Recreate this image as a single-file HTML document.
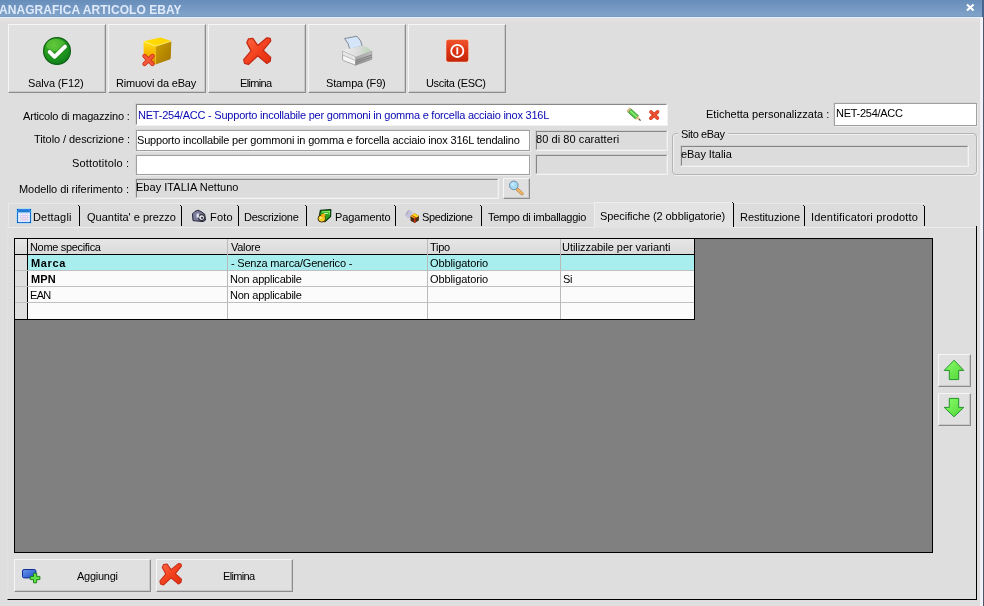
<!DOCTYPE html>
<html><head><meta charset="utf-8">
<style>
html,body{margin:0;padding:0;}
body{width:984px;height:606px;overflow:hidden;position:relative;background:#dedede;font-family:"Liberation Sans",sans-serif;font-size:11px;color:#000;}
.a{position:absolute;box-sizing:border-box;}
.t{will-change:transform;position:absolute;white-space:nowrap;line-height:13px;height:13px;}
.btn{position:absolute;box-sizing:border-box;background:#e0e0e0;border-top:1px solid #f6f6f6;border-left:1px solid #f6f6f6;border-right:1px solid #8c8c8c;border-bottom:1px solid #8c8c8c;box-shadow:inset -1px -1px 0 #c8c8c8;}
.sunk{position:absolute;box-sizing:border-box;border:1px solid;border-color:#d0d0d0 #f2f2f2 #f2f2f2 #d0d0d0;}
.sunk>i{position:absolute;left:0;top:0;right:0;bottom:0;border:1px solid;border-color:#888 #fff #fff #888;background:#fff;}
.ro>i{background:#dcdcdc;border-color:#868686 #e4e4e4 #e4e4e4 #868686;}
.flat{position:absolute;box-sizing:border-box;border:1px solid #a0a0a0;background:#fff;box-shadow:-1px -1px 0 0 #d4d4d4, 1px 1px 0 0 #ececec;}
.sep{position:absolute;width:1px;background:#000;top:206px;height:20px;}
.sep::before{content:"";position:absolute;left:-1px;top:-1px;width:1px;height:1px;background:#222;}
</style></head><body>
<!-- title bar -->
<div class="a" id="title" style="left:0;top:0;width:984px;height:17px;background:linear-gradient(#678dba,#80a3c9 94%,#7095bf);"></div>
<div class="a" style="left:0;top:17px;width:984px;height:1px;background:#eaf1fa;"></div>
<div class="a" style="left:0;top:18px;width:980px;height:1px;background:#dee1e6;"></div>
<div class="a" style="left:0;top:19px;width:980px;height:3px;background:#e2e1e0;"></div>
<div class="t" id="ttl" style="left:-0.75px;top:4px;font-weight:bold;color:#dfeafa;font-size:12px;letter-spacing:0.054px;">ANAGRAFICA ARTICOLO EBAY</div>
<svg class="a" style="left:965px;top:3px" width="11" height="10" viewBox="0 0 11 10"><path d="M2 1.5 L8.600 7.5 M8.600 1.5 L2 7.5" stroke="#fff" stroke-width="2.1"/></svg>
<!-- window right edge -->
<div class="a" style="left:980px;top:18px;width:3px;height:588px;background:#f1f2f8;"></div>
<div class="a" style="left:983px;top:0;width:1px;height:606px;background:#4e5868;"></div>
<div class="a" style="left:982px;top:0;width:2px;height:17px;background:#46668f;"></div>

<!-- toolbar buttons -->
<div class="btn" id="b1" style="left:8px;top:24px;width:98px;height:69px;"></div>
<div class="t" id="x1" style="left:28.00px;top:77px;letter-spacing:-0.125px;">Salva (F12)</div>
<div class="btn" id="b2" style="left:108px;top:24px;width:98px;height:69px;"></div>
<div class="t" id="x2" style="left:115.60px;top:77px;letter-spacing:-0.214px;">Rimuovi da eBay</div>
<div class="btn" id="b3" style="left:208px;top:24px;width:98px;height:69px;"></div>
<div class="t" id="x3" style="left:239.60px;top:77px;letter-spacing:-0.667px;">Elimina</div>
<div class="btn" id="b4" style="left:308px;top:24px;width:98px;height:69px;"></div>
<div class="t" id="x4" style="left:325.75px;top:77px;letter-spacing:-0.135px;">Stampa (F9)</div>
<div class="btn" id="b5" style="left:408px;top:24px;width:98px;height:69px;"></div>
<div class="t" id="x5" style="left:426.00px;top:77px;letter-spacing:-0.327px;">Uscita (ESC)</div>

<!-- labels -->
<div class="t" id="l1" style="left:22.60px;top:110px;letter-spacing:-0.177px;">Articolo di magazzino :</div>
<div class="t" id="l2" style="left:33.85px;top:133px;letter-spacing:-0.066px;">Titolo / descrizione :</div>
<div class="t" id="l3" style="left:72.10px;top:157px;letter-spacing:0.175px;">Sottotitolo :</div>
<div class="t" id="l4" style="left:19.20px;top:183px;letter-spacing:-0.056px;">Modello di riferimento :</div>
<div class="t" id="l5" style="left:705.90px;top:108px;letter-spacing:0.014px;">Etichetta personalizzata :</div>

<!-- fields -->
<div class="sunk" style="left:135px;top:103px;width:533px;height:23px;"><i></i></div>
<div class="t" id="f1" style="left:138.30px;top:109px;color:#0808b4;letter-spacing:-0.223px;">NET-254/ACC - Supporto incollabile per gommoni in gomma e forcella acciaio inox 316L</div>
<div class="flat" style="left:136px;top:130px;width:394px;height:21px;"></div>
<div class="t" id="f2" style="left:137.10px;top:134px;letter-spacing:-0.188px;">Supporto incollabile per gommoni in gomma e forcella acciaio inox 316L tendalino</div>
<div class="flat" style="left:136px;top:155px;width:394px;height:20px;"></div>
<div class="sunk ro" style="left:135px;top:178px;width:364px;height:21px;"><i></i></div>
<div class="t" id="f4" style="left:136.00px;top:181px;letter-spacing:0.028px;">Ebay ITALIA Nettuno</div>
<div class="sunk ro" style="left:535px;top:130px;width:133px;height:21px;"><i></i></div>
<div class="t" id="f5" style="left:536.20px;top:133px;letter-spacing:0.068px;">80 di 80 caratteri</div>
<div class="sunk ro" style="left:535px;top:154px;width:133px;height:21px;"><i></i></div>
<div class="btn" style="left:503px;top:178px;width:27px;height:21px;"></div>
<div class="flat" style="left:834px;top:103px;width:143px;height:23px;"></div>
<div class="t" id="f6" style="left:835.60px;top:107px;letter-spacing:-0.275px;">NET-254/ACC</div>

<!-- group box -->
<div class="a" style="left:672px;top:133px;width:305px;height:42px;border:1px solid #b4b4b4;border-radius:4px;box-shadow:1px 1px 0 #f0f0f0, inset 1px 1px 0 #f0f0f0;"></div>
<div class="a" style="left:678px;top:132px;width:50px;height:4px;background:#dedede;"></div>
<div class="t" id="g1" style="left:680.50px;top:128px;letter-spacing:-0.382px;">Sito eBay</div>
<div class="sunk ro" style="left:680px;top:145px;width:289px;height:22px;"><i></i></div>
<div class="t" id="g2" style="left:681.00px;top:148px;letter-spacing:-0.060px;">eBay Italia</div>

<!-- tabs -->
<div class="a" style="left:8px;top:203px;width:917px;height:24px;border-top:1px solid #e8e8e8;border-left:1px solid #e8e8e8;background:#dcdcdc;"></div>
<div class="a" id="tabpanel" style="left:7px;top:227px;width:970px;height:373px;border-left:1px solid #e1e1e1;border-top:1px solid #ebebeb;border-right:1px solid #000;border-bottom:1px solid #000;"></div>
<div class="a" style="left:594px;top:202px;width:140px;height:26px;background:#e3e3e3;border-top:1px solid #eeeeee;border-left:1px solid #eeeeee;"></div>
<div class="a" style="left:976px;top:226px;width:1px;height:2px;background:#000;"></div>
<div class="sep" style="left:79px"></div>
<div class="sep" style="left:181px"></div>
<div class="sep" style="left:238px"></div>
<div class="sep" style="left:306px"></div>
<div class="sep" style="left:395px"></div>
<div class="sep" style="left:481px"></div>
<div class="sep" style="left:733px;top:203px;height:24px;"></div>
<div class="sep" style="left:804px"></div>
<div class="sep" style="left:924px"></div>
<div class="t" id="t1" style="left:33.10px;top:211px;letter-spacing:0.164px;">Dettagli</div>
<div class="t" id="t2" style="left:86.70px;top:211px;letter-spacing:0.000px;">Quantita' e prezzo</div>
<div class="t" id="t3" style="left:209.80px;top:211px;letter-spacing:0.217px;">Foto</div>
<div class="t" id="t4" style="left:244.25px;top:211px;letter-spacing:-0.270px;">Descrizione</div>
<div class="t" id="t5" style="left:334.80px;top:211px;letter-spacing:-0.081px;">Pagamento</div>
<div class="t" id="t6" style="left:421.70px;top:211px;letter-spacing:-0.389px;">Spedizione</div>
<div class="t" id="t7" style="left:488.15px;top:211px;letter-spacing:-0.261px;">Tempo di imballaggio</div>
<div class="t" id="t8" style="left:600.00px;top:210px;letter-spacing:-0.077px;">Specifiche (2 obbligatorie)</div>
<div class="t" id="t9" style="left:739.90px;top:211px;letter-spacing:-0.045px;">Restituzione</div>
<div class="t" id="t10" style="left:810.60px;top:211px;letter-spacing:0.191px;">Identificatori prodotto</div>

<!-- grid area -->
<div class="a" id="gray" style="left:14px;top:238px;width:919px;height:315px;background:#808080;border:1px solid #000;"></div>
<div class="a" id="grid" style="left:14px;top:238px;width:681px;height:82px;background:#fbfbfb;border:1px solid #000;"></div>
<div class="a" style="left:15px;top:239px;width:679px;height:15px;background:linear-gradient(#e6e6e6,#dadada);"></div>
<div class="a" style="left:15px;top:254px;width:679px;height:1px;background:#000;"></div>
<div class="a" style="left:15px;top:255px;width:12px;height:64px;background:#dedede;"></div>
<div class="a" style="left:27px;top:239px;width:1px;height:80px;background:#000;"></div>
<div class="a" style="left:28px;top:255px;width:666px;height:15px;background:#a8eeee;"></div>
<!-- grid lines -->
<div class="a" style="left:15px;top:270px;width:679px;height:1px;background:#c0c0c0;"></div>
<div class="a" style="left:15px;top:286px;width:679px;height:1px;background:#c0c0c0;"></div>
<div class="a" style="left:15px;top:302px;width:679px;height:1px;background:#c0c0c0;"></div>
<div class="a" style="left:227px;top:239px;width:1px;height:80px;background:#bababa;"></div>
<div class="a" style="left:427px;top:239px;width:1px;height:80px;background:#bababa;"></div>
<div class="a" style="left:560px;top:239px;width:1px;height:80px;background:#bababa;"></div>
<div class="t" id="h1" style="left:30.00px;top:241px;letter-spacing:-0.327px;">Nome specifica</div>
<div class="t" id="h2" style="left:230.65px;top:241px;letter-spacing:-0.270px;">Valore</div>
<div class="t" id="h3" style="left:430.25px;top:241px;letter-spacing:-0.266px;">Tipo</div>
<div class="t" id="h4" style="left:562.25px;top:241px;letter-spacing:-0.062px;">Utilizzabile per varianti</div>
<div class="t" id="r1a" style="left:30.95px;top:257px;font-weight:bold;letter-spacing:0.663px;">Marca</div>
<div class="t" id="r1b" style="left:230.90px;top:257px;letter-spacing:-0.200px;">- Senza marca/Generico -</div>
<div class="t" id="r1c" style="left:430.40px;top:257px;letter-spacing:-0.099px;">Obbligatorio</div>
<div class="t" id="r2a" style="left:30.95px;top:273px;font-weight:bold;letter-spacing:0.175px;">MPN</div>
<div class="t" id="r2b" style="left:229.90px;top:273px;letter-spacing:-0.235px;">Non applicabile</div>
<div class="t" id="r2c" style="left:430.40px;top:273px;letter-spacing:-0.099px;">Obbligatorio</div>
<div class="t" id="r2d" style="left:563.00px;top:273px;letter-spacing:-0.400px;">Si</div>
<div class="t" id="r3a" style="left:30.00px;top:289px;letter-spacing:-0.700px;">EAN</div>
<div class="t" id="r3b" style="left:229.90px;top:289px;letter-spacing:-0.235px;">Non applicabile</div>

<!-- arrows -->
<div class="btn" style="left:938px;top:354px;width:33px;height:33px;"></div>
<div class="btn" style="left:938px;top:393px;width:33px;height:33px;"></div>

<!-- bottom buttons -->
<div class="btn" id="bb1" style="left:14px;top:559px;width:137px;height:33px;"></div>
<div class="t" id="bt1" style="left:77.40px;top:570px;letter-spacing:-0.271px;">Aggiungi</div>
<div class="btn" id="bb2" style="left:156px;top:559px;width:137px;height:33px;"></div>
<div class="t" id="bt2" style="left:223.30px;top:570px;letter-spacing:-0.642px;">Elimina</div>

<!-- ICONS -->
<svg class="a" style="left:0;top:0;pointer-events:none" width="984" height="606" viewBox="0 0 984 606">
<defs>
<radialGradient id="gc" cx="0.38" cy="0.28" r="0.8"><stop offset="0" stop-color="#4cbc2a"/><stop offset="0.5" stop-color="#259c1e"/><stop offset="1" stop-color="#0a7a1e"/></radialGradient>
<linearGradient id="rx" x1="0" y1="0" x2="1" y2="1"><stop offset="0" stop-color="#ff6a48"/><stop offset="0.5" stop-color="#f4421f"/><stop offset="1" stop-color="#e02e10"/></linearGradient>
<linearGradient id="bxl" x1="0" y1="0" x2="0" y2="1"><stop offset="0" stop-color="#ffe21a"/><stop offset="0.5" stop-color="#f6b800"/><stop offset="1" stop-color="#d88000"/></linearGradient>
<linearGradient id="bxr" x1="0" y1="0" x2="1" y2="1"><stop offset="0" stop-color="#cfa000"/><stop offset="1" stop-color="#a27400"/></linearGradient>
<linearGradient id="bxt" x1="0" y1="0" x2="1" y2="0"><stop offset="0" stop-color="#ffe000"/><stop offset="1" stop-color="#ffd000"/></linearGradient>
<linearGradient id="pw" x1="0" y1="0" x2="0" y2="1"><stop offset="0" stop-color="#f0552c"/><stop offset="0.5" stop-color="#dc3412"/><stop offset="1" stop-color="#c42608"/></linearGradient>
<linearGradient id="prr" x1="0" y1="0" x2="0" y2="1"><stop offset="0" stop-color="#c2c2c2"/><stop offset="1" stop-color="#8e8e8e"/></linearGradient>
<linearGradient id="prt" x1="0" y1="0" x2="1" y2="0"><stop offset="0" stop-color="#eeeeee"/><stop offset="0.6" stop-color="#d8dad8"/><stop offset="0.85" stop-color="#c2d6be"/><stop offset="1" stop-color="#c8ccc8"/></linearGradient>
<linearGradient id="ga" x1="0" y1="0" x2="1" y2="1"><stop offset="0" stop-color="#8cff6a"/><stop offset="1" stop-color="#4ed436"/></linearGradient>
<linearGradient id="bl" x1="0" y1="0" x2="1" y2="1"><stop offset="0" stop-color="#6a98f0"/><stop offset="1" stop-color="#1c4cc0"/></linearGradient>
<g id="bigx"><path d="M5 2.3 L9.4 1.7 L14.3 8.8 L23.5 1.2 L26.8 1.7 L27.3 4.5 L19.7 13.7 L27.3 20.8 L26.8 24.6 L23.5 26.8 L14.3 19.2 L5 27.9 L1.2 26.8 L0.3 23 L7.7 14.3 L3.4 6.1 Z" fill="url(#rx)" stroke="#c42c14" stroke-width="1.3" stroke-linejoin="round"/></g>
</defs>
<!-- save -->
<circle cx="57" cy="51" r="13.4" fill="url(#gc)" stroke="#0f6214" stroke-width="1.2"/>
<ellipse cx="55.5" cy="45" rx="9.5" ry="6" fill="#9be860" opacity="0.28"/>
<path d="M49.6 51.8 L54.6 56.8 L65 46.600" fill="none" stroke="#0f7418" stroke-width="5.2" stroke-linecap="round" stroke-linejoin="round" opacity="0.55"/>
<path d="M49.6 51.8 L54.6 56.8 L65 46.600" fill="none" stroke="#fff" stroke-width="3.9" stroke-linecap="round" stroke-linejoin="round"/>
<!-- box -->
<path d="M143.5 41.2 L160.5 37.4 L171.3 41 L155.6 46.2 Z" fill="url(#bxt)"/>
<path d="M143.5 41.2 L155.6 46.2 L155.6 64.6 L145.2 59.6 Q143.8 58.8 143.8 57 Z" fill="url(#bxl)"/>
<path d="M155.6 46.2 L171.3 41 L170.8 57.6 Q170.8 59 169.6 59.4 L155.6 64.6 Z" fill="url(#bxr)"/>
<path d="M143.8 41.400 L155.6 46.2 L171 41.2" fill="none" stroke="#fff27a" stroke-width="0.9" opacity="0.9"/>
<path d="M155.6 46.4 V64.2" stroke="#f4c418" stroke-width="0.8" opacity="0.8"/>
<path d="M144.5 56 L152.5 64 M152.5 56 L144.5 64" stroke="#c8301a" stroke-width="4.4" stroke-linecap="round"/>
<path d="M144.5 56 L152.5 64 M152.5 56 L144.5 64" stroke="#f65838" stroke-width="2.8" stroke-linecap="round"/>
<!-- elimina big -->
<use href="#bigx" transform="translate(243.4,36.6)"/>
<!-- printer -->
<path d="M344.6 38.6 L356.8 36.2 Q361.6 40.4 362.2 46.2 L349.8 49.4 Q348.8 43 344.6 38.6 Z" fill="#d4e4f9" stroke="#6a727c" stroke-width="0.8" stroke-linejoin="round"/>
<path d="M342.6 51 Q342.6 50.2 344 49.8 L349.6 48.400 L362.2 45.8 L365.6 46.4 L371.6 50.600 Q372 51.2 371.6 51.6 L355.8 57.2 Z" fill="url(#prt)"/>
<path d="M342.6 51 L355.8 57.2 L355.6 65.2 L343.6 60.6 Q342.6 60.2 342.6 59.2 Z" fill="#f6f6f6" stroke="#8e8e8e" stroke-width="0.7" stroke-linejoin="round"/>
<path d="M342.8 51.2 L355.6 57.3 L355.6 60.2 L342.8 54.600 Z" fill="#e6e6e6"/>
<path d="M355.8 57.2 L371.8 51.4 L371.8 59.4 L355.6 65.2 Z" fill="url(#prr)" stroke="#8a8a8a" stroke-width="0.5"/>
<path d="M355.8 60.600 L371.8 55 M355.8 62.600 L371.8 57" stroke="#7a7a7a" stroke-width="0.9"/>
<path d="M342.8 55 L355.6 60.600" stroke="#aaaaaa" stroke-width="0.8"/>
<!-- power -->
<rect x="445.5" y="39" width="23.6" height="23.6" rx="2.6" fill="#f6dccc"/>
<rect x="446.3" y="39.8" width="22" height="22" rx="2" fill="url(#pw)"/>
<circle cx="457.3" cy="50.9" r="6.1" fill="none" stroke="#fff" stroke-width="1.8"/>
<rect x="456.4" y="47.4" width="1.8" height="7" fill="#fff"/>
<!-- pencil -->
<g transform="translate(628.3,109.5) rotate(42)">
<rect x="0" y="-2.1" width="2" height="4.2" fill="#e8c890" stroke="#a08040" stroke-width="0.5"/>
<rect x="2" y="-2.2" width="9.600" height="4.4" fill="#52c442" stroke="#2e8a22" stroke-width="0.7"/>
<rect x="2.4" y="-0.9" width="9" height="1.3" fill="#90f080"/>
<path d="M11.6 -2.2 L16.2 0 L11.6 2.2 Z" fill="#e6c08c"/>
<path d="M14.600 -0.9 L17.2 0 L14.600 0.9 Z" fill="#504040"/>
</g>
<!-- small red x -->
<path d="M651 112 L657.4 118 M657.6 111.8 L650.8 118.2" stroke="#cf3a22" stroke-width="3.6" stroke-linecap="round"/>
<path d="M651 112 L657.4 118 M657.6 111.8 L650.8 118.2" stroke="#ee5030" stroke-width="2.2" stroke-linecap="round"/>
<!-- magnifier -->
<path d="M517 189 L522 193.6" stroke="#b08048" stroke-width="3.2" stroke-linecap="round"/>
<path d="M517 189 L522 193.6" stroke="#f6b868" stroke-width="2" stroke-linecap="round"/>
<circle cx="513.8" cy="185.4" r="4.3" fill="#a4dcf8" stroke="#7088a0" stroke-width="1"/>
<circle cx="512.8" cy="184.2" r="1.6" fill="#c8ecff"/>
<!-- calendar -->
<rect x="16.2" y="208.2" width="15.6" height="15.6" rx="1" fill="#86dcff" opacity="0.6"/>
<rect x="17.5" y="209.5" width="13" height="13" fill="#cfe3fb" stroke="#1f6fd2" stroke-width="1"/>
<ellipse cx="24.5" cy="217.6" rx="4.4" ry="3.4" fill="#e9b6e4" opacity="0.55"/>
<rect x="17" y="209" width="14" height="3.4" fill="#2c8ae6"/>
<rect x="19" y="210.600" width="10" height="0.9" fill="#1660b8"/>
<rect x="17" y="209" width="1" height="1" fill="#103a86"/><rect x="30" y="209" width="1" height="1" fill="#103a86"/><rect x="17" y="222" width="1" height="1" fill="#103a86"/><rect x="30" y="222" width="1" height="1" fill="#103a86"/>
<circle cx="19.6" cy="214.4" r="0.6" fill="#fff"/><circle cx="19.6" cy="216.6" r="0.6" fill="#fff"/><circle cx="19.6" cy="218.8" r="0.6" fill="#fff"/><circle cx="19.6" cy="221.0" r="0.6" fill="#fff"/><circle cx="21.8" cy="214.4" r="0.6" fill="#fff"/><circle cx="21.8" cy="216.6" r="0.6" fill="#fff"/><circle cx="21.8" cy="218.8" r="0.6" fill="#fff"/><circle cx="21.8" cy="221.0" r="0.6" fill="#fff"/><circle cx="24.0" cy="214.4" r="0.6" fill="#fff"/><circle cx="24.0" cy="216.6" r="0.6" fill="#fff"/><circle cx="24.0" cy="218.8" r="0.6" fill="#fff"/><circle cx="24.0" cy="221.0" r="0.6" fill="#fff"/><circle cx="26.2" cy="214.4" r="0.6" fill="#fff"/><circle cx="26.2" cy="216.6" r="0.6" fill="#fff"/><circle cx="26.2" cy="218.8" r="0.6" fill="#fff"/><circle cx="26.2" cy="221.0" r="0.6" fill="#fff"/><circle cx="28.4" cy="214.4" r="0.6" fill="#fff"/><circle cx="28.4" cy="216.6" r="0.6" fill="#fff"/><circle cx="28.4" cy="218.8" r="0.6" fill="#fff"/><circle cx="28.4" cy="221.0" r="0.6" fill="#fff"/>
<!-- camera -->
<path d="M192.4 214 L195 211.4 L198 210.2 L201 211.6 L204.6 214 L205.6 220 L203 221.6 L193 220.6 Z" fill="#7c7c9c" stroke="#26263a" stroke-width="1"/>
<circle cx="201.6" cy="217.6" r="3" fill="#e8e8f0" stroke="#30303c" stroke-width="1.1"/>
<circle cx="202" cy="217.8" r="1.1" fill="#30303c"/>
<rect x="196.500" y="213.6" width="2.6" height="4" fill="#f4f4ff" opacity="0.8"/>
<!-- payment -->
<path d="M320.4 210.2 L330.800 209.6 L330.6 216.6 L325 221.6 L318.6 220 Z" fill="#26a01c" stroke="#0a2c0a" stroke-width="1.1" stroke-linejoin="round"/>
<path d="M322 211.8 L329.4 211.4 L329.2 214.6" stroke="#7ae860" stroke-width="1.2" fill="none"/>
<path d="M324 213.6 L328 213.4" stroke="#c8ffb0" stroke-width="1"/>
<ellipse cx="321.8" cy="218.6" rx="3.8" ry="3.5" fill="#f2cc22" stroke="#3a2a06" stroke-width="0.9"/>
<ellipse cx="323.2" cy="215.400" rx="2.2" ry="1.8" fill="#f0a818"/>
<circle cx="320.8" cy="218" r="1.1" fill="#fff27a"/>
<!-- shipping -->
<path d="M404.8 215 L408.2 209.4 L412.800 212 L411 217.4 L408.2 218.6 Z" fill="#c2c2d8"/>
<path d="M406 214.8 L408.6 210.8" stroke="#9a9ab4" stroke-width="0.8"/>
<path d="M410.4 216.2 L414.6 213.2 L419 216 L418.8 220.6 L414.6 223 L410.6 220.8 Z" fill="#4a2c10"/>
<path d="M410.4 216.2 L414.6 213.2 L419 216 L414.8 218.6 Z" fill="#ffd81a"/>
<path d="M414.8 218.6 V222.8" stroke="#d83418" stroke-width="1.4"/>
<path d="M412 215.6 L416.6 218" stroke="#d83418" stroke-width="1"/>
<!-- up / down arrows -->
<path d="M954.1 360.2 L963.8 370.4 L958.7 370.4 L958.7 379.6 L949.3 379.6 L949.3 370.4 L944.2 370.4 Z" fill="url(#ga)" stroke="#23922a" stroke-width="1" stroke-linejoin="miter"/>
<path d="M954.1 416.800 L963.8 407.4 L958.7 407.4 L958.7 398.4 L949.3 398.4 L949.3 407.4 L944.2 407.4 Z" fill="url(#ga)" stroke="#23922a" stroke-width="1"/>
<!-- add icon -->
<rect x="22.5" y="569.5" width="13.4" height="8.4" rx="1.6" fill="url(#bl)" stroke="#122a94" stroke-width="1"/>
<path d="M33.500 573.2 H36.700 V576.4 H39.900 V579.6 H36.700 V582.800 H33.500 V579.6 H30.300 V576.4 H33.500 Z" fill="#62e044" stroke="#157a15" stroke-width="0.9"/>
<!-- elimina small -->
<use href="#bigx" transform="translate(159.6,562.6) scale(0.8)"/>
</svg>
</body></html>
